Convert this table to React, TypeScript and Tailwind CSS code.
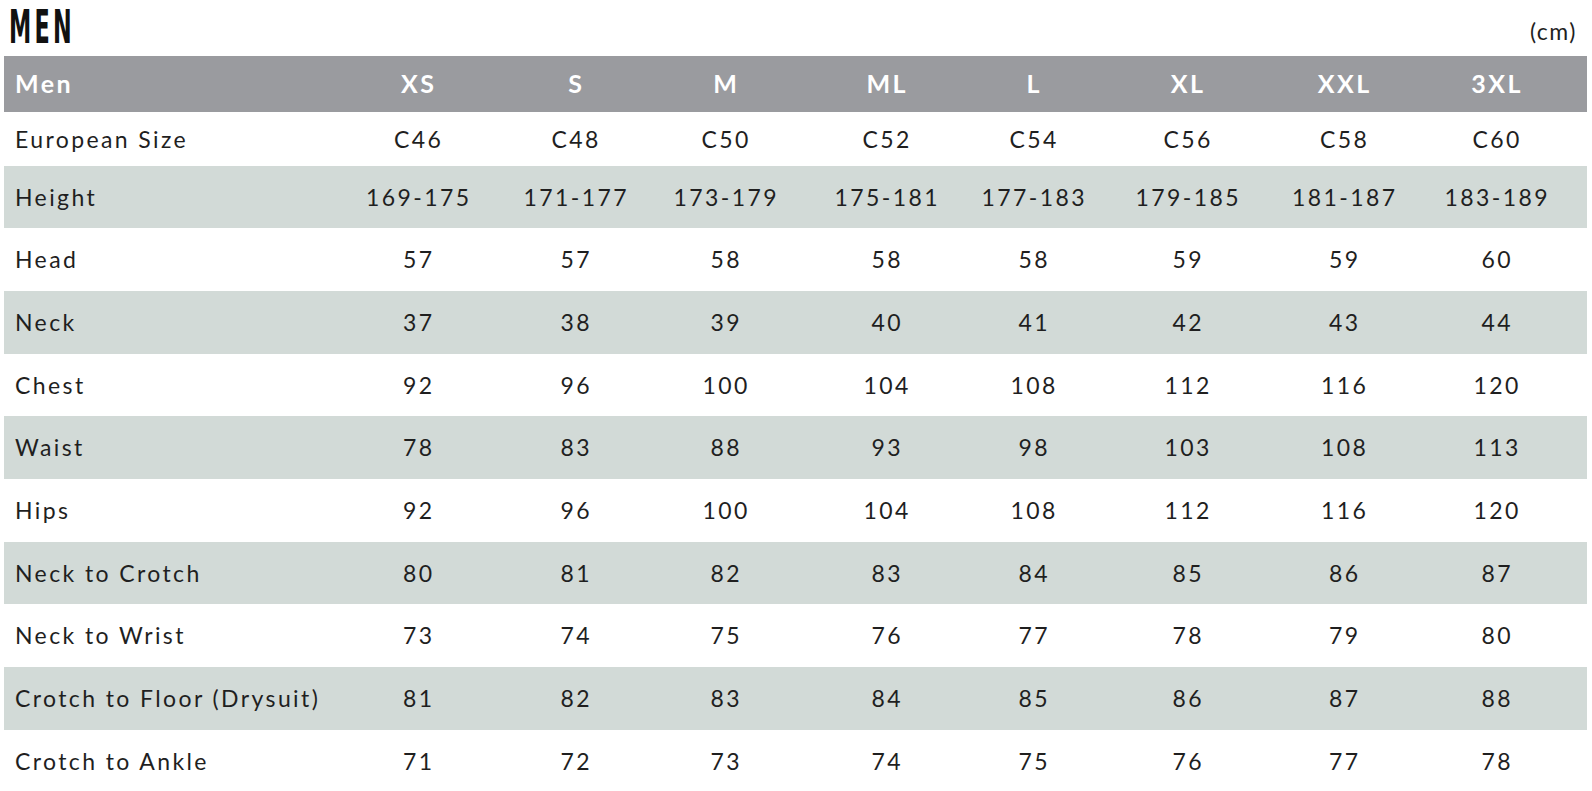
const sizes = ['XS', 'S', 'M', 'ML', 'L', 'XL', 'XXL', '3XL'];

const rows: { label: string; values: string[]; shaded?: boolean; tall?: boolean }[] = [
  { label: 'European Size', values: ['C46', 'C48', 'C50', 'C52', 'C54', 'C56', 'C58', 'C60'] },
  { label: 'Height', values: ['169-175', '171-177', '173-179', '175-181', '177-183', '179-185', '181-187', '183-189'], shaded: true, tall: true },
  { label: 'Head', values: ['57', '57', '58', '58', '58', '59', '59', '60'], tall: true },
  { label: 'Neck', values: ['37', '38', '39', '40', '41', '42', '43', '44'], shaded: true, tall: true },
  { label: 'Chest', values: ['92', '96', '100', '104', '108', '112', '116', '120'], tall: true },
  { label: 'Waist', values: ['78', '83', '88', '93', '98', '103', '108', '113'], shaded: true, tall: true },
  { label: 'Hips', values: ['92', '96', '100', '104', '108', '112', '116', '120'], tall: true },
  { label: 'Neck to Crotch', values: ['80', '81', '82', '83', '84', '85', '86', '87'], shaded: true, tall: true },
  { label: 'Neck to Wrist', values: ['73', '74', '75', '76', '77', '78', '79', '80'], tall: true },
  { label: 'Crotch to Floor (Drysuit)', values: ['81', '82', '83', '84', '85', '86', '87', '88'], shaded: true, tall: true },
  { label: 'Crotch to Ankle', values: ['71', '72', '73', '74', '75', '76', '77', '78'], tall: true },
];

// the printed chart's columns aren't evenly spaced, widths tuned so the values sit where they do there
const cols = 'grid-cols-[333px_161px_154px_146px_176px_118px_190px_123px_1fr]';

export default function App() {
  return (
    <div className="w-[1592px] h-[791px] overflow-hidden bg-white text-[#1f1f1f] font-['Lato','Noto_Sans',sans-serif]">
      <div className="flex items-end justify-between h-[56px] pl-[9px] pr-[15px] pb-[6px]">
        <h1 className="w-[130px] leading-none">
          <span className="inline-block font-['DejaVu_Sans_Condensed','DejaVu_Sans',sans-serif] font-bold text-[46px] leading-none tracking-[6px] text-[#111] scale-x-[0.54] origin-left whitespace-nowrap">
            MEN
          </span>
        </h1>
        <span className="text-[23px] tracking-[1.5px] leading-none mb-[7px]">(cm)</span>
      </div>

      <div className="ml-[4px] w-[1583px]">
        <div className={`grid ${cols} h-[56px] items-center bg-[#9a9b9f] text-white font-bold text-[25px] tracking-[2.5px]`}>
          <div className="pl-[11px]">Men</div>
          {sizes.map((s) => (
            <div key={s} className="text-center pl-[2.5px]">
              {s}
            </div>
          ))}
        </div>

        {rows.map((r) => (
          <div
            key={r.label}
            className={`grid ${cols} items-center text-[23px] tracking-[2.4px] ${
              r.tall ? 'h-[62.7px]' : 'h-[53.5px]'
            } ${r.shaded ? 'bg-[#d2dad7]' : 'bg-white'}`}
          >
            <div className="pl-[11px] whitespace-nowrap">{r.label}</div>
            {r.values.map((v, i) => (
              <div key={i} className="text-center pl-[2.4px] whitespace-nowrap">
                {v}
              </div>
            ))}
          </div>
        ))}
      </div>
    </div>
  );
}
